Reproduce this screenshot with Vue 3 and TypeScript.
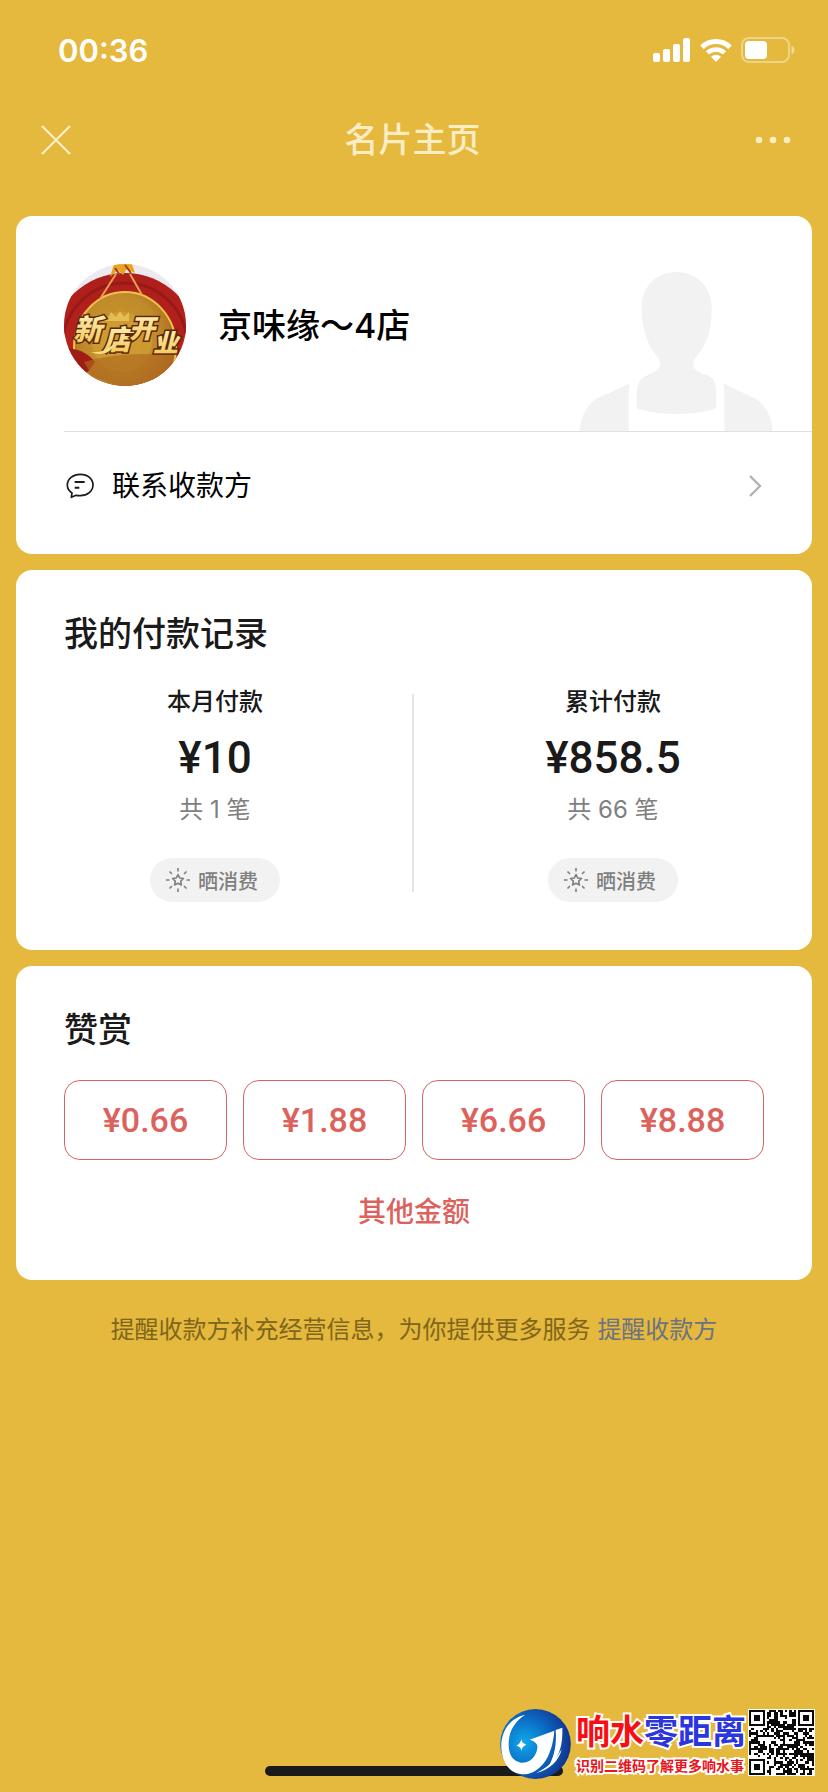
<script setup lang="ts">
interface PaymentStat {
  label: string
  amount: string
  count: number
}

const stats: PaymentStat[] = [
  { label: '本月付款', amount: '¥10', count: 1 },
  { label: '累计付款', amount: '¥858.5', count: 66 },
]

const rewards: string[] = ['¥0.66', '¥1.88', '¥6.66', '¥8.88']

const rays: number[] = [0, 45, 90, 135, 180, 225, 270, 315]

const QR_SIZE = 29

// Finder squares in three corners, deterministic data modules elsewhere.
function isDark(x: number, y: number): boolean {
  const corners = [[0, 0], [QR_SIZE - 7, 0], [0, QR_SIZE - 7]]
  for (const [cx, cy] of corners) {
    const dx = x - cx
    const dy = y - cy
    if (dx >= -1 && dx <= 7 && dy >= -1 && dy <= 7) {
      const ring = Math.max(Math.abs(dx - 3), Math.abs(dy - 3))
      return ring === 3 || ring <= 1
    }
  }
  const hash = Math.sin(x * 12.9898 + y * 78.233) * 43758.5453
  return hash - Math.floor(hash) > 0.48
}

let qrPath = ''
for (let y = 0; y < QR_SIZE; y++) {
  for (let x = 0; x < QR_SIZE; x++) {
    if (isDark(x, y)) qrPath += `M${x} ${y}h1v1h-1z`
  }
}
</script>

<template>
  <div class="page">
    <div class="status">
      <span class="time">00:36</span>
      <div class="status-icons">
        <svg width="38" height="24" viewBox="0 0 38 24" fill="#fff" aria-hidden="true">
          <rect x="0" y="15" width="7" height="9" rx="2" />
          <rect x="10" y="11" width="7" height="13" rx="2" />
          <rect x="20" y="6" width="7" height="18" rx="2" />
          <rect x="30" y="0" width="7" height="24" rx="2" />
        </svg>
        <svg width="32" height="24" viewBox="0 0 32 24" aria-hidden="true">
          <g fill="none" stroke="#fff" stroke-width="5">
            <path d="M2 9.300a20 20 0 0 1 28 0" />
            <path d="M7.500 15a12.200 12.200 0 0 1 17 0" stroke-width="4.500" />
          </g>
          <path d="M11 18.800a7.400 7.400 0 0 1 10 0L16 24z" fill="#fff" />
        </svg>
        <svg width="54" height="26" viewBox="0 0 54 26" aria-hidden="true">
          <rect x="1" y="1" width="47" height="24" rx="7" fill="none" stroke="#fff" stroke-opacity=".38" stroke-width="2" />
          <rect x="4" y="4" width="22" height="18" rx="4" fill="#fff" />
          <path d="M50.500 8.500c4 1.500 4 7.500 0 9z" fill="#fff" fill-opacity=".45" />
        </svg>
      </div>
    </div>

    <header class="nav">
      <button class="icon-btn" type="button" aria-label="关闭">
        <svg width="30" height="30" viewBox="0 0 30 30" fill="none" stroke="currentColor" stroke-width="2.400">
          <path d="M1 1l28 28M29 1L1 29" />
        </svg>
      </button>
      <h1>名片主页</h1>
      <button class="icon-btn" type="button" aria-label="更多">
        <svg width="38" height="30" viewBox="0 0 38 30" fill="currentColor">
          <circle cx="5" cy="15" r="3.300" />
          <circle cx="19" cy="15" r="3.300" />
          <circle cx="33" cy="15" r="3.300" />
        </svg>
      </button>
    </header>

    <main class="cards">
      <section class="card">
        <div class="profile">
          <svg class="avatar" viewBox="0 0 122 122" role="img" aria-label="新店开业">
            <defs>
              <clipPath id="avatar-clip"><circle cx="61" cy="61" r="61" /></clipPath>
              <radialGradient id="gong" cx=".45" cy=".4" r=".62">
                <stop offset="0" stop-color="#c99a2b" />
                <stop offset=".6" stop-color="#c08a2a" />
                <stop offset="1" stop-color="#a8601e" />
              </radialGradient>
              <linearGradient id="drum" x1="0" y1="0" x2="0" y2="1">
                <stop offset="0" stop-color="#ad1f1b" />
                <stop offset=".5" stop-color="#b5211b" />
                <stop offset="1" stop-color="#8c2a14" />
              </linearGradient>
              <linearGradient id="gold" x1="0" y1="0" x2="0" y2="1">
                <stop offset="0" stop-color="#fff6c4" />
                <stop offset="1" stop-color="#f0c552" />
              </linearGradient>
            </defs>
            <g clip-path="url(#avatar-clip)">
              <rect width="122" height="122" fill="#eceaf0" />
              <ellipse cx="61" cy="78" rx="72" ry="69" fill="url(#drum)" />
              <ellipse cx="61" cy="80" rx="62" ry="61" fill="none" stroke="#98191a" stroke-width="3" />
              <ellipse cx="61" cy="83" rx="51" ry="55" fill="url(#gong)" stroke="#eec34a" stroke-width="2" />
              <ellipse cx="58" cy="78" rx="30" ry="30" fill="#d5a335" opacity=".5" />
              <path d="M0 84q20 0 31 14l-7 10L0 106z" fill="#a01d17" />
              <path d="M20 98Q62 86 110 92L102 112 61 124 28 112z" fill="#ad681f" opacity=".65" />
              <path d="M52 10L36 35M66 10l12 21" stroke="#e3a24e" stroke-width="2" />
              <path d="M46 13l4-13h18l3 9-8-4-4 6-5-5z" fill="#e8a322" />
              <path d="M51 4l5 7M61 1l6 8" stroke="#a83a12" stroke-width="2" />
              <path d="M40 57l-2-7 6 4 3-6 5 5 4-6 4 6 5-5 0 9z" fill="#e6bd55" />
              <g class="avatar-text" fill="url(#gold)" stroke="#5c2709" stroke-width="3">
                <text x="9" y="76" font-size="29">新</text>
                <text x="39" y="86" font-size="28">店</text>
                <text x="65" y="74" font-size="26">开</text>
                <text x="89" y="88" font-size="25">业</text>
              </g>
              <path d="M26 88q14 2 26-10-7 17-26 10z" fill="#f7dd84" />
            </g>
          </svg>
          <h2 class="name">京味缘～4店</h2>
          <svg class="silhouette" viewBox="116 98 581 478" fill="#f2f2f2" aria-hidden="true">
            <path d="M408 98C345 98 303 145 303 205C303 275 325 325 350 352C360 365 362 380 352 390C335 405 312 408 302 420C290 435 288 455 288 475V507C350 531 466 531 528 507V475C528 450 525 430 515 416C500 405 475 405 462 388C455 374 458 362 470 350C500 315 514 275 514 205C514 145 470 98 408 98Z" />
            <path d="M268 432C210 462 180 470 158 486C130 510 120 545 116 576H264V480Q264 450 268 432Z" />
            <path d="M548 432C600 460 640 472 662 492C685 515 695 545 697 576H552V480Q552 450 548 432Z" />
          </svg>
        </div>
        <a class="contact" href="#contact">
          <svg width="28" height="26" viewBox="-2 -2 84 78" fill="none" stroke="#1a1a1a" stroke-width="5" aria-hidden="true">
            <path d="M14 71L16 58C7 52 2 44 2 34C2 16 19 2 41 2S79 16 79 34S62 66 41 66C36 66 32 66 28 65Z" stroke-linejoin="round" />
            <path d="M24 25h30M24 42h14" stroke-width="6" />
          </svg>
          <span>联系收款方</span>
          <svg class="chevron" width="14" height="24" viewBox="0 0 14 24" fill="none" stroke="#b2b2b2" stroke-width="2.400" aria-hidden="true">
            <path d="M2 2l10 10L2 22" />
          </svg>
        </a>
      </section>

      <section class="card padded">
        <h2 class="title">我的付款记录</h2>
        <div class="stats">
          <div v-for="stat in stats" :key="stat.label" class="stat">
            <div class="label">{{ stat.label }}</div>
            <div class="amount">{{ stat.amount }}</div>
            <div class="count">共 {{ stat.count }} 笔</div>
            <button class="pill" type="button">
              <svg width="24" height="24" viewBox="-12 -12 24 24" fill="none" stroke="#7f7f7f" stroke-width="1.600" aria-hidden="true">
                <path v-for="ray in rays" :key="ray" d="M0 -12v3.500" :transform="`rotate(${ray})`" />
                <path d="M0 -5.500L1.700 -2L5.500 -1.500L2.700 1.200L3.400 5L0 3.200L-3.400 5L-2.700 1.200L-5.500 -1.500L-1.700 -2Z" stroke-linejoin="round" />
              </svg>
              <span>晒消费</span>
            </button>
          </div>
        </div>
      </section>

      <section class="card padded">
        <h2 class="title">赞赏</h2>
        <div class="rewards">
          <button v-for="reward in rewards" :key="reward" class="reward" type="button">{{ reward }}</button>
        </div>
        <button class="other" type="button">其他金额</button>
      </section>
    </main>

    <p class="hint">提醒收款方补充经营信息，为你提供更多服务 <a href="#remind">提醒收款方</a></p>

    <footer class="bottom">
      <div class="home-bar"></div>
      <div class="brand">
        <svg width="71" height="70" viewBox="27 27 213 210" aria-hidden="true">
          <defs>
            <radialGradient id="globe" cx=".34" cy=".48" r=".7">
              <stop offset="0" stop-color="#12a8ea" />
              <stop offset=".5" stop-color="#0a6cc4" />
              <stop offset="1" stop-color="#142a88" />
            </radialGradient>
          </defs>
          <ellipse cx="133.500" cy="132" rx="106" ry="105" fill="url(#globe)" />
          <g fill="#fff">
            <path d="M103 44C54 54 28 98 31 145C34 190 56 222 100 223C156 218 185 160 190 92L116 119Q142 126 139 145C134 176 112 190 90 188C58 184 48 150 55 110C61 82 78 59 103 44Z" />
            <path d="M194 90L214 83C215 122 212 168 172 200C192 166 197 130 194 90Z" />
            <path d="M212 148C204 182 176 210 136 219C170 203 194 180 212 148Z" />
            <path d="M91 118Q93 131 106 134Q93 138 92 152Q88 139 76 137Q88 132 91 118Z" />
          </g>
        </svg>
        <div class="brand-text">
          <div class="brand-name"><span class="red">响水</span><span class="blue">零距离</span></div>
          <div class="brand-note">识别二维码了解更多响水事</div>
        </div>
        <svg class="qr" width="67" height="67" viewBox="-0.500 -0.500 30 30" shape-rendering="crispEdges" role="img" aria-label="二维码">
          <rect x="-0.500" y="-0.500" width="30" height="30" fill="#fff" />
          <path :d="qrPath" fill="#0a0a0a" />
        </svg>
      </div>
    </footer>
  </div>
</template>

<style>
body {
  background: #e5b83e;
}
</style>

<style scoped>
.page {
  position: relative;
  box-sizing: border-box;
  min-height: 100vh;
  display: flex;
  flex-direction: column;
  background: #e5b83e;
  color: #1a1a1a;
  font-family: Inter, "Noto Sans CJK SC", sans-serif;
}

h1, h2, p {
  margin: 0;
}

button {
  padding: 0;
  border: 0;
  background: none;
  color: inherit;
  font: inherit;
  cursor: pointer;
}

a {
  color: inherit;
  text-decoration: none;
}

svg {
  display: block;
  flex: none;
}

.status {
  display: flex;
  align-items: center;
  justify-content: space-between;
  height: 100px;
  padding: 0 33px 0 58px;
  color: #fff;
}

.time {
  font-size: 31px;
  font-weight: 600;
}

.status-icons {
  display: flex;
  align-items: center;
  gap: 9px;
}

.nav {
  display: flex;
  align-items: center;
  justify-content: space-between;
  height: 80px;
  margin-bottom: 36px;
  padding: 0 36px 0 41px;
  color: #faedc4;
}

.nav h1 {
  font-size: 34px;
  font-weight: 500;
  line-height: 48px;
}

.cards {
  display: flex;
  flex-direction: column;
  gap: 16px;
  padding: 0 16px;
}

.card {
  background: #fff;
  border-radius: 16px;
  overflow: hidden;
}

.padded {
  padding: 40px 0 48px;
}

.profile {
  display: flex;
  align-items: center;
  height: 215px;
  margin-left: 48px;
  border-bottom: 1px solid #e0e0e0;
}

.avatar {
  width: 122px;
  height: 122px;
  margin-top: 2px;
}

.avatar-text {
  font-family: "Noto Sans CJK SC", sans-serif;
  font-weight: 900;
  font-style: italic;
  paint-order: stroke;
}

.name {
  flex: 1;
  margin-top: 4px;
  margin-left: 32px;
  color: #000;
  font-size: 34px;
  font-weight: 500;
  line-height: 48px;
}

.silhouette {
  align-self: flex-end;
  width: 194px;
  height: 159px;
  margin-right: 39px;
}

.contact {
  display: flex;
  align-items: center;
  height: 108px;
  padding: 0 50px 14px;
  color: #000;
  font-size: 28px;
  line-height: 40px;
}

.contact span {
  flex: 1;
  margin-left: 18px;
}

.title {
  padding: 0 48px;
  font-size: 34px;
  font-weight: 500;
  line-height: 48px;
}

.stats {
  position: relative;
  display: grid;
  grid-template-columns: 1fr 1fr;
  margin-top: 28px;
}

.stats::after {
  content: "";
  position: absolute;
  top: 8px;
  bottom: 10px;
  left: 50%;
  width: 2px;
  margin-left: -2px;
  background: #e5e5e5;
}

.stat {
  display: flex;
  flex-direction: column;
  align-items: center;
}

.label {
  font-size: 24px;
  font-weight: 500;
  line-height: 32px;
}

.amount {
  margin-top: 16px;
  font-family: Roboto, "Noto Sans CJK SC", sans-serif;
  font-size: 44px;
  font-weight: 500;
  line-height: 48px;
}

.count {
  margin-top: 12px;
  color: #7f7f7f;
  font-size: 24px;
  line-height: 32px;
}

.pill {
  display: flex;
  align-items: center;
  gap: 8px;
  height: 44px;
  margin-top: 32px;
  padding: 0 22px 0 16px;
  border-radius: 22px;
  background: #f2f2f2;
  color: #7f7f7f;
  font-size: 20px;
  font-weight: 500;
}

.rewards {
  display: grid;
  grid-template-columns: repeat(4, 1fr);
  gap: 16px;
  margin-top: 26px;
  padding: 0 48px;
}

.reward {
  height: 80px;
  border: 1px solid #cf6763;
  border-radius: 16px;
  color: #dc625d;
  font-family: Roboto, "Noto Sans CJK SC", sans-serif;
  font-size: 34px;
  font-weight: 500;
}

.other {
  display: block;
  margin: 32px auto 0;
  color: #dc625d;
  font-size: 28px;
  font-weight: 500;
  line-height: 40px;
}

.hint {
  margin-top: 34px;
  color: #80661b;
  font-size: 24px;
  line-height: 32px;
  text-align: center;
}

.hint a {
  color: #6b7280;
}

.bottom {
  position: relative;
  margin-top: auto;
  padding: 60px 0 16px;
}

.home-bar {
  width: 36%;
  height: 10px;
  margin: 0 auto;
  border-radius: 5px;
  background: #1a1a1a;
}

.brand {
  position: absolute;
  right: 13px;
  bottom: 13px;
  display: flex;
  align-items: flex-start;
}

.brand-text {
  margin: 0 2px 0 5px;
  font-family: "Noto Sans CJK SC", sans-serif;
  white-space: nowrap;
  paint-order: stroke;
  -webkit-text-stroke: 4px #fff;
}

.brand-name {
  font-size: 34px;
  font-weight: 700;
  line-height: 42px;
}

.brand-note {
  color: #e8141c;
  font-size: 14px;
  font-weight: 700;
  line-height: 28px;
}

.red {
  color: #f90d12;
}

.blue {
  color: #2b36dc;
}
</style>
